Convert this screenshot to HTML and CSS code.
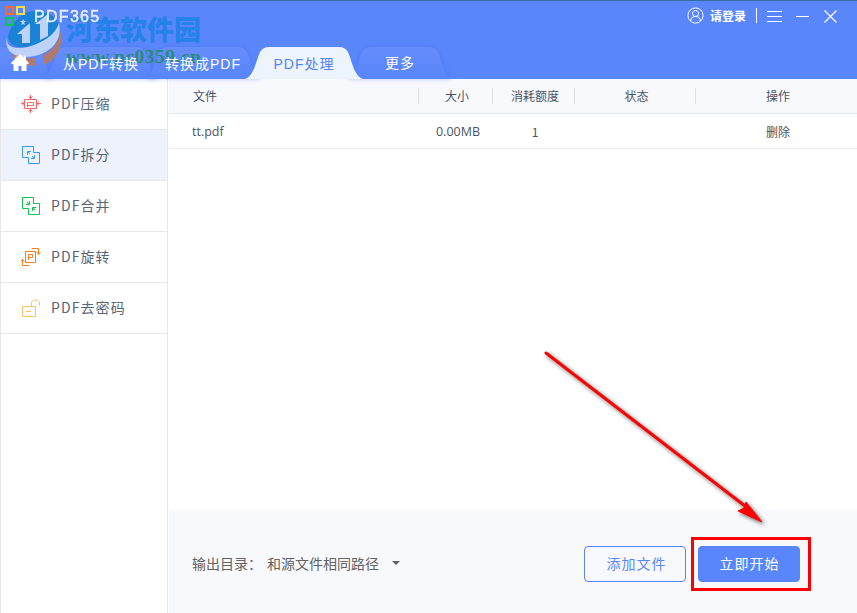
FILE: index.html
```
<!doctype html>
<html lang="zh-CN">
<head>
    <meta charset="UTF-8">
    <meta name="viewport" content="width=device-width, initial-scale=1.0">
    <title>PDF365</title>
    <link rel="stylesheet" href="styles.css">
</head>
<body>
    <svg class="defs" width="0" height="0">
        <defs>
            <linearGradient id="tab-fill" x1="0" y1="0" x2="0" y2="1">
                <stop offset="0" stop-color="#668dfd"/>
                <stop offset="1" stop-color="#5785fb"/>
            </linearGradient>
        </defs>
    </svg>
    <header class="header">
        <div class="titlebar">
            <div class="brand">
                <svg class="brand-logo" width="20" height="20" viewBox="0 0 20 20" fill="none" stroke-width="2">
                    <path stroke="#fb6a22" d="M1 1h7v7H1z"/>
                    <path stroke="#f4dc43" d="M12 1h7v7h-7z"/>
                    <path stroke="#0bc846" d="M1 12h7v7H1z"/>
                </svg>
                <span class="brand-name">PDF365</span>
            </div>
            <div class="window-tools">
                <svg width="17" height="17" viewBox="0 0 17 17" fill="none" stroke="#fff">
                    <circle cx="8.5" cy="8.5" r="7.6"/>
                    <circle cx="8.5" cy="6.5" r="3"/>
                    <path d="M3.6 14c.3-3 2-4.6 4.9-4.6s4.600 1.600 4.900 4.600"/>
                </svg>
                <span class="login">请登录</span>
                <span class="divider"></span>
                <svg class="menu" width="15" height="12" viewBox="0 0 15 12" stroke="#fff"><path d="M0 .5h15M0 5.500h15M0 10.500h15"/></svg>
                <svg class="minimize" width="13" height="12" viewBox="0 0 13 12" stroke="#fff"><path d="M0 5.500h13"/></svg>
                <svg class="close" width="13" height="13" viewBox="0 0 13 13" stroke="#fff" stroke-width="1.200"><path d="M.5.5l12 12M12.500.5l-12 12"/></svg>
            </div>
        </div>
        <nav class="tabs">
            <div class="tab home">
                <svg class="tab-shape" width="56" height="32" viewBox="0 0 56 32"><path d="M0 0H33Q39 0 42 5C46 14 47 29 56 32H0z"/></svg>
                <svg class="home-icon" width="18" height="17" viewBox="0 0 18 17" fill="#fff"><path d="M9 0l3.500 3.500V1.500H15V6l3 3-1 1.500-1.500-1V17h-5v-5h-3v5h-5V9.500L1 10.500 0 9z"/></svg>
            </div>
            <div class="tab">
                <svg class="tab-shape" width="118" height="32" viewBox="0 0 118 32"><path d="M0 32C9 29 11 14 15 5Q18 0 24 0H94Q100 0 103 5C107 14 109 29 118 32z"/></svg>
                <span>从PDF转换</span>
            </div>
            <div class="tab">
                <svg class="tab-shape" width="118" height="32" viewBox="0 0 118 32"><path d="M0 32C9 29 11 14 15 5Q18 0 24 0H94Q100 0 103 5C107 14 109 29 118 32z"/></svg>
                <span>转换成PDF</span>
            </div>
            <div class="tab active">
                <svg class="tab-shape" width="118" height="32" viewBox="0 0 118 32"><path d="M0 32C9 29 11 14 15 5Q18 0 24 0H94Q100 0 103 5C107 14 109 29 118 32z"/></svg>
                <span>PDF处理</span>
            </div>
            <div class="tab more">
                <svg class="tab-shape" width="106" height="32" viewBox="0 0 106 32"><path d="M0 32C9 29 11 14 15 5Q18 0 24 0H82Q88 0 91 5C95 14 97 29 106 32z"/></svg>
                <span>更多</span>
            </div>
        </nav>
        <div class="watermark">
            <svg class="watermark-logo" width="58" height="60" viewBox="0 0 58 60">
                <path fill="#1583d2" d="M3 26C8 10 18 1 30 1c11 0 20 5 24 13 0 10-10 20-27 23C14 39 3 36 3 26z"/>
                <path fill="#c7dafa" d="M2 27C0 38 13 41 29 35 42 30 51 23 54 13c4 18-9 30-25 33C12 50-2 42 2 27zM17 33V24h-5L25 13v20zM35 30V14h-5L43 4v22z"/>
                <path fill="#b87962" d="M56 21c3 20-9 35-25 35-11 0-20-4-25-12 9 4 17 5 25 4v8l8-1V45c8-4 15-13 17-24z"/>
                <path fill="#c7dafa" d="M18 9l1 2h2l-2 2 1 2-2-1-2 1 1-2-2-2h2z"/>
                <path fill="#f3a25a" d="M9 48l5-4v8z"/>
            </svg>
            <div class="watermark-name">河东软件园</div>
            <div class="watermark-url">www.pc0359.cn</div>
        </div>
    </header>
    <div class="layout">
        <aside class="sidebar">
            <div class="side-item">
                <svg width="22" height="20" viewBox="0 0 22 20" fill="none" stroke="#fb6364">
                    <path d="M3.500 5.500h12v9h-12zM6.500 13V8.500h6v3h-6M9.500 1v4M7.500 2.500l2 2 2-2M9.500 19v-4M7.500 17.500l2-2 2 2M-.5 9.500h4M1 7.500l2 2-2 2M20 9.500h-4M18 7.500l-2 2 2 2"/>
                </svg>
                <span>PDF压缩</span>
            </div>
            <div class="side-item selected">
                <svg width="22" height="20" viewBox="0 0 22 20" fill="none" stroke="#3898f6">
                    <path d="M1.500 1.500h11v6h6v11h-11v-6h-6zM6.500 10V6.500H10M7 7l2 2M13.500 10v3.500H10M13 13l-2-2"/>
                </svg>
                <span>PDF拆分</span>
            </div>
            <div class="side-item">
                <svg width="22" height="20" viewBox="0 0 22 20" fill="none" stroke="#0dc74c">
                    <path d="M1.500 1.500h11v6h6v11h-11v-6h-6zM8.500 5v3.500H5M8 8L6 6M11.500 15v-3.500H15M12 12l2 2"/>
                </svg>
                <span>PDF合并</span>
            </div>
            <div class="side-item">
                <svg width="22" height="20" viewBox="0 0 22 20" fill="none" stroke="#fa7d1c">
                    <path d="M4.500 4.500h10v11h-10zM7.500 13V7.500h4v3h-4M11 1.500h6.500v6M15.500 5.500l2 1.500 2-1.500M8 18.500H1.500v-6M-.5 14.500l2-2 2 2"/>
                </svg>
                <span>PDF旋转</span>
            </div>
            <div class="side-item">
                <svg width="22" height="20" viewBox="0 0 22 20" fill="none" stroke="#fbc563">
                    <path d="M1.500 8.500h13v10h-13zM5 13.500h5M10.500 8V5c0-4 8-4 8 0v2.500"/>
                </svg>
                <span>PDF去密码</span>
            </div>
        </aside>
        <main class="content">
            <div class="row head">
                <div class="cell file">文件</div>
                <div class="cell">大小</div>
                <div class="cell">消耗额度</div>
                <div class="cell">状态</div>
                <div class="cell">操作</div>
            </div>
            <div class="row">
                <div class="cell file">tt.pdf</div>
                <div class="cell size">0.00MB</div>
                <div class="cell">1</div>
                <div class="cell"></div>
                <div class="cell">删除</div>
            </div>
            <footer class="footer">
                <span class="output-label">输出目录：</span>
                <span class="output-path">和源文件相同路径</span>
                <span class="caret"></span>
                <button class="btn">添加文件</button>
                <button class="btn primary">立即开始</button>
            </footer>
        </main>
    </div>
    <div class="highlight"></div>
    <svg class="arrow" width="240" height="195" viewBox="0 0 240 195">
        <path d="M6 13L205 166" stroke="#f00" stroke-width="3" stroke-linecap="round"/>
        <path d="M222 182l-24-11 6-3 2-6z" fill="#f00" stroke="#f00"/>
    </svg>
</body>
</html>
```

FILE: styles.css
```
* {
    margin: 0;
    padding: 0;
    box-sizing: border-box;
}

body {
    display: flex;
    flex-direction: column;
    position: relative;
    width: 857px;
    height: 613px;
    overflow: hidden;
    background: #fff;
    font-family: "Noto Sans CJK SC", sans-serif;
    color: #4b5362;
}

svg {
    display: block;
    flex-shrink: 0;
}

.defs {
    position: absolute;
}

.header {
    position: relative;
    height: 79px;
    border-top: 1px solid #33709f;
    background: #5986fb;
    color: #fff;
}

.titlebar {
    display: flex;
    justify-content: space-between;
    height: 46px;
    padding: 0 20px 0 5px;
}

.brand {
    display: flex;
    gap: 9px;
    padding-top: 5px;
}

.brand-logo {
    position: relative;
    z-index: 2;
}

.brand-name {
    position: relative;
    z-index: 2;
    font: 16px/22px "Liberation Sans", sans-serif;
    letter-spacing: 1.300px;
    -webkit-text-stroke: .5px #fff;
    opacity: .85;
}

.window-tools {
    display: flex;
    align-items: center;
    height: 29px;
}

.login {
    margin-left: 6px;
    font-size: 12px;
    font-weight: bold;
}

.divider {
    width: 1px;
    height: 15px;
    margin-left: 10px;
    background: #fff;
}

.menu {
    margin: 2px 0 0 10px;
}

.minimize {
    margin: 2px 0 0 14px;
}

.close {
    margin: 1px 0 0 15px;
}

.tabs {
    display: flex;
    height: 32px;
}

.tab {
    position: relative;
    width: 118px;
    height: 32px;
    margin-left: -16px;
    text-align: center;
    font-family: "Liberation Sans", "Noto Sans CJK SC", sans-serif;
    font-size: 14px;
    line-height: 34px;
    letter-spacing: 1px;
}

.tab-shape {
    position: absolute;
    inset: 0;
    fill: url(#tab-fill);
    filter: drop-shadow(0 0 2px rgba(55, 100, 225, .35));
}

.tab span,
.home-icon {
    position: relative;
    z-index: 2;
}

.tab.home {
    width: 58px;
    margin-left: 0;
    padding: 7px 0 0 11px;
}

.tab.active {
    z-index: 3;
    margin-left: -17px;
    color: #5782f4;
}

.tab.active .tab-shape {
    fill: #eef4fc;
    filter: none;
}

.tab.more {
    width: 106px;
    line-height: 32px;
}

.watermark {
    position: absolute;
    z-index: 1;
    top: 9px;
    left: 5px;
    width: 200px;
    height: 60px;
}

.watermark-logo {
    position: absolute;
    opacity: .92;
}

.watermark-name {
    position: absolute;
    left: 61px;
    top: 0;
    font-size: 27px;
    font-weight: 900;
    line-height: 38px;
    color: #2482e8;
    white-space: nowrap;
}

.watermark-url {
    position: absolute;
    left: 61px;
    top: 36px;
    font: bold 19.500px/22px "Liberation Serif", serif;
    color: #2b8a77;
    letter-spacing: .5px;
}

.layout {
    display: flex;
    flex: 1;
}

.sidebar {
    width: 168px;
    border: solid #e8e8ea;
    border-width: 0 1px;
}

.side-item {
    display: flex;
    align-items: center;
    gap: 8px;
    height: 51px;
    padding-left: 20px;
    border-bottom: 1px solid #e8e8ea;
    font-size: 14px;
    letter-spacing: 1.100px;
    color: #596476;
}

.side-item span {
    padding-bottom: 2px;
}

.selected {
    background: #edf2fd;
}

.content {
    display: flex;
    flex: 1;
    flex-direction: column;
    margin-left: 1px;
}

.row {
    display: grid;
    grid-template-columns: 249px 74px 82px 121px 162px;
    align-items: center;
    height: 35px;
    border-bottom: 1px solid #ececee;
    font-size: 12px;
    line-height: 15px;
}

.head {
    border-color: #dbe6f6;
    background: #f8f9fd;
}

.cell {
    padding-left: 4px;
    text-align: center;
}

.head .cell {
    padding-left: 3px;
    padding-bottom: 1px;
}

.cell.file {
    padding-left: 23px;
    text-align: left;
}

.head .cell.file {
    padding-left: 24px;
}

.head .cell + .cell {
    border-left: 1px solid #dddee2;
}

.row:not(.head) .file,
.cell.size {
    font-family: "Open Sans", sans-serif;
    font-size: 12.500px;
}

.cell.size {
    padding-left: 6px;
}

.footer {
    display: flex;
    align-items: center;
    height: 103px;
    margin-top: auto;
    padding: 5px 57px 0 23px;
    background: #f8f9fd;
    font-size: 14px;
    color: #626262;
}

.output-label {
    width: 75px;
}

.output-label,
.output-path {
    padding-bottom: 2px;
}

.caret {
    margin: 0 auto 2px 13px;
    border: 4px solid transparent;
    border-top-color: #606060;
    border-bottom: 0;
}

.btn {
    width: 102px;
    height: 36px;
    padding: 0 0 2px 3px;
    border: 1px solid #5986fb;
    border-radius: 4px;
    background: transparent;
    font: 14px "Noto Sans CJK SC", sans-serif;
    letter-spacing: 1px;
    color: #5986fb;
}

.primary {
    margin-left: 12px;
    padding-left: 1px;
    background: #5986fb;
    color: #fff;
}

.highlight {
    position: absolute;
    left: 691px;
    top: 537px;
    width: 120px;
    height: 54px;
    border: 3px solid #f00;
}

.arrow {
    position: absolute;
    left: 540px;
    top: 340px;
    filter: drop-shadow(2px 2px 2px rgba(0, 0, 0, .6));
}
```
